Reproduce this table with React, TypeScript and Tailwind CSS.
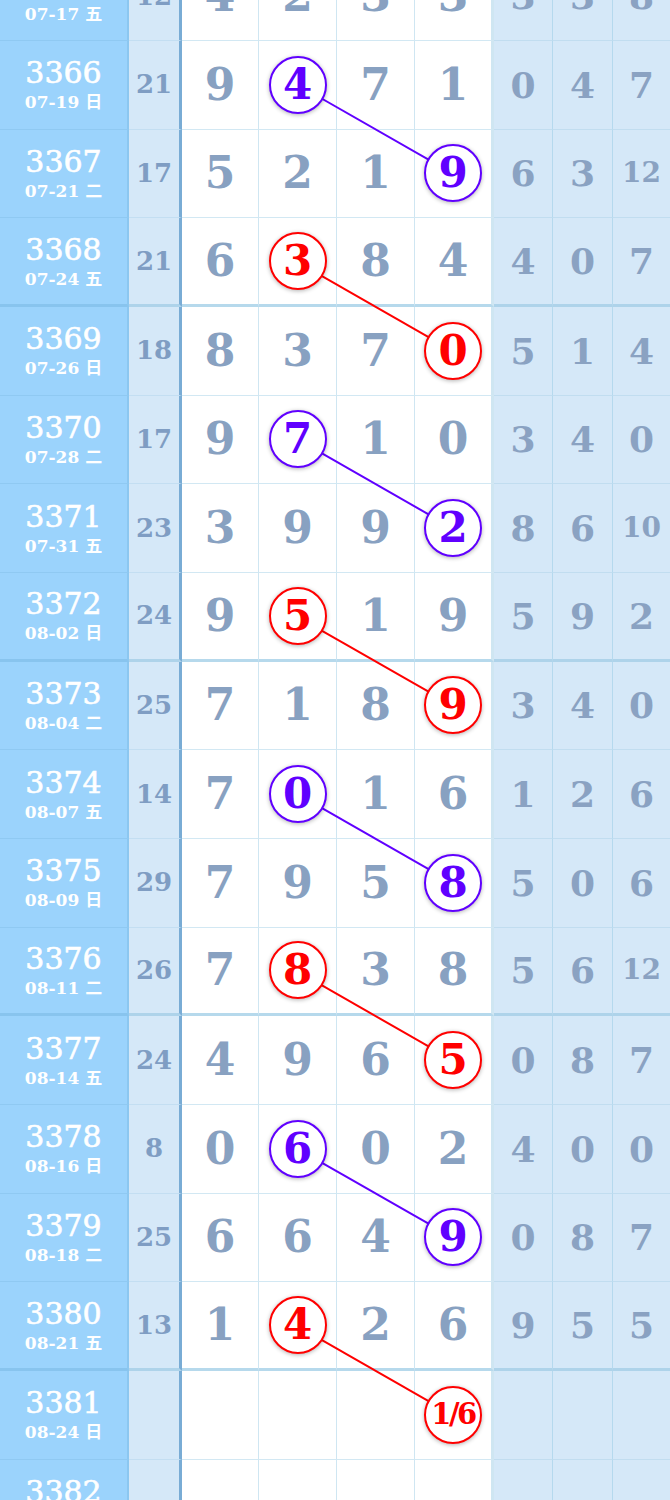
import React from 'react';

type Row = {
  no: string;
  date: string;
  sum: string;
  nums: number[];
  right: string[];
  hit?: { col: number; text: string; tone: 'red' | 'purple' };
};

const RH = 88.67;

const rows: Row[] = [
  { no: '3365', date: '07-17 五', sum: '12', nums: [4, 2, 3, 3], right: ['3', '3', '8'] },
  { no: '3366', date: '07-19 日', sum: '21', nums: [9, 4, 7, 1], right: ['0', '4', '7'], hit: { col: 1, text: '4', tone: 'purple' } },
  { no: '3367', date: '07-21 二', sum: '17', nums: [5, 2, 1, 9], right: ['6', '3', '12'], hit: { col: 3, text: '9', tone: 'purple' } },
  { no: '3368', date: '07-24 五', sum: '21', nums: [6, 3, 8, 4], right: ['4', '0', '7'], hit: { col: 1, text: '3', tone: 'red' } },
  { no: '3369', date: '07-26 日', sum: '18', nums: [8, 3, 7, 0], right: ['5', '1', '4'], hit: { col: 3, text: '0', tone: 'red' } },
  { no: '3370', date: '07-28 二', sum: '17', nums: [9, 7, 1, 0], right: ['3', '4', '0'], hit: { col: 1, text: '7', tone: 'purple' } },
  { no: '3371', date: '07-31 五', sum: '23', nums: [3, 9, 9, 2], right: ['8', '6', '10'], hit: { col: 3, text: '2', tone: 'purple' } },
  { no: '3372', date: '08-02 日', sum: '24', nums: [9, 5, 1, 9], right: ['5', '9', '2'], hit: { col: 1, text: '5', tone: 'red' } },
  { no: '3373', date: '08-04 二', sum: '25', nums: [7, 1, 8, 9], right: ['3', '4', '0'], hit: { col: 3, text: '9', tone: 'red' } },
  { no: '3374', date: '08-07 五', sum: '14', nums: [7, 0, 1, 6], right: ['1', '2', '6'], hit: { col: 1, text: '0', tone: 'purple' } },
  { no: '3375', date: '08-09 日', sum: '29', nums: [7, 9, 5, 8], right: ['5', '0', '6'], hit: { col: 3, text: '8', tone: 'purple' } },
  { no: '3376', date: '08-11 二', sum: '26', nums: [7, 8, 3, 8], right: ['5', '6', '12'], hit: { col: 1, text: '8', tone: 'red' } },
  { no: '3377', date: '08-14 五', sum: '24', nums: [4, 9, 6, 5], right: ['0', '8', '7'], hit: { col: 3, text: '5', tone: 'red' } },
  { no: '3378', date: '08-16 日', sum: '8', nums: [0, 6, 0, 2], right: ['4', '0', '0'], hit: { col: 1, text: '6', tone: 'purple' } },
  { no: '3379', date: '08-18 二', sum: '25', nums: [6, 6, 4, 9], right: ['0', '8', '7'], hit: { col: 3, text: '9', tone: 'purple' } },
  { no: '3380', date: '08-21 五', sum: '13', nums: [1, 4, 2, 6], right: ['9', '5', '5'], hit: { col: 1, text: '4', tone: 'red' } },
  { no: '3381', date: '08-24 日', sum: '', nums: [], right: ['', '', ''], hit: { col: 3, text: '1/6', tone: 'red' } },
  { no: '3382', date: '08-26 二', sum: '', nums: [], right: ['', '', ''] },
];

const serif = 'font-["DejaVu_Serif","Liberation_Serif","Noto_Sans_CJK_SC",serif]';
const numWidths = ['w-[77px] border-r', 'w-[78px] border-r', 'w-[78px] border-r', 'w-[79px] border-r-[3px] border-r-[#79acd5]'];
const rightWidths = ['w-[59px] border-r', 'w-[60px] border-r', 'w-[57px]'];
const colX = [220, 298, 376, 453];

function Hit({ text, tone }: { text: string; tone: 'red' | 'purple' }) {
  const cls =
    tone === 'red'
      ? 'border-[#ff0000] text-[#ff0000]'
      : 'border-[#6000ff] text-[#6000ff]';
  return (
    <div
      className={`relative flex h-[58px] w-[58px] items-center justify-center rounded-full border-[2.5px] bg-white shadow-[0_1px_4px_rgba(0,0,0,0.3)] ${cls}`}
    >
      <span className={`font-bold leading-none ${text.length > 1 ? 'text-[29px] tracking-[-2.5px]' : 'text-[42px]'}`}>{text}</span>
    </div>
  );
}

export default function App() {
  const lines: { x1: number; y1: number; x2: number; y2: number; c: string }[] = [];
  rows.forEach((r, i) => {
    if (r.hit && r.hit.col === 1 && rows[i + 1]?.hit) {
      lines.push({
        x1: colX[1],
        y1: i * RH + RH / 2,
        x2: colX[3],
        y2: (i + 1) * RH + RH / 2,
        c: r.hit.tone === 'red' ? '#ff0000' : '#6000ff',
      });
    }
  });

  return (
    <div className={`h-[1500px] w-[670px] overflow-hidden bg-white ${serif}`}>
      <div className="relative -mt-[47.67px]">
        <svg className="pointer-events-none absolute left-0 top-0" width={670} height={rows.length * RH}>
          {lines.map((l, k) => (
            <line key={k} x1={l.x1} y1={l.y1} x2={l.x2} y2={l.y2} stroke={l.c} strokeWidth={2} />
          ))}
        </svg>
        {rows.map((r) => {
          const thick = (parseInt(r.no) - 3364) % 4 === 0;
          const bb = thick ? 'border-b-[3px]' : 'border-b-[1.5px]';
          return (
            <div key={r.no} className="flex h-[88.67px]">
              <div
                className={`flex w-[129px] flex-col items-center justify-center gap-[6px] border-r-2 border-r-[#8cc7f0] bg-[#9bd3fc] text-white ${bb} ${thick ? 'border-b-[#88c4ee]' : 'border-b-[#8fc9f2]'}`}
              >
                <span className="text-[30px] leading-none [-webkit-text-stroke:0.6px_white]">{r.no}</span>
                <span className="text-[17px] font-bold leading-none">{r.date}</span>
              </div>
              <div
                className={`flex w-[53px] items-center justify-center border-r-[3px] border-r-[#79acd5] bg-[#d5e8f8] text-[26px] font-bold text-[#7f9dc3] ${bb} ${thick ? 'border-b-[#aed3ea]' : 'border-b-[#c3def2]'}`}
              >
                {r.sum}
              </div>
              {numWidths.map((w, c) => (
                <div
                  key={c}
                  className={`flex items-center justify-center border-r-[#cfe6f2] bg-white ${w} ${bb} ${thick ? 'border-b-[#b6d9ec]' : 'border-b-[#d2e8f3]'}`}
                >
                  {r.hit && r.hit.col === c ? (
                    <Hit text={r.hit.text} tone={r.hit.tone} />
                  ) : (
                    <span className="text-[44px] font-bold leading-none text-[#88a1c1]">{r.nums[c] ?? ''}</span>
                  )}
                </div>
              ))}
              {rightWidths.map((w, c) => (
                <div
                  key={c}
                  className={`flex items-center justify-center border-r-[#b5d9ee] bg-[#d5e8f8] font-bold text-[#8aa2c2] ${w} ${bb} ${thick ? 'border-b-[#aed3ea]' : 'border-b-[#c1ddf0]'} ${r.right[c].length > 1 ? 'text-[28px]' : 'text-[36px]'}`}
                >
                  {r.right[c]}
                </div>
              ))}
            </div>
          );
        })}
      </div>
    </div>
  );
}
